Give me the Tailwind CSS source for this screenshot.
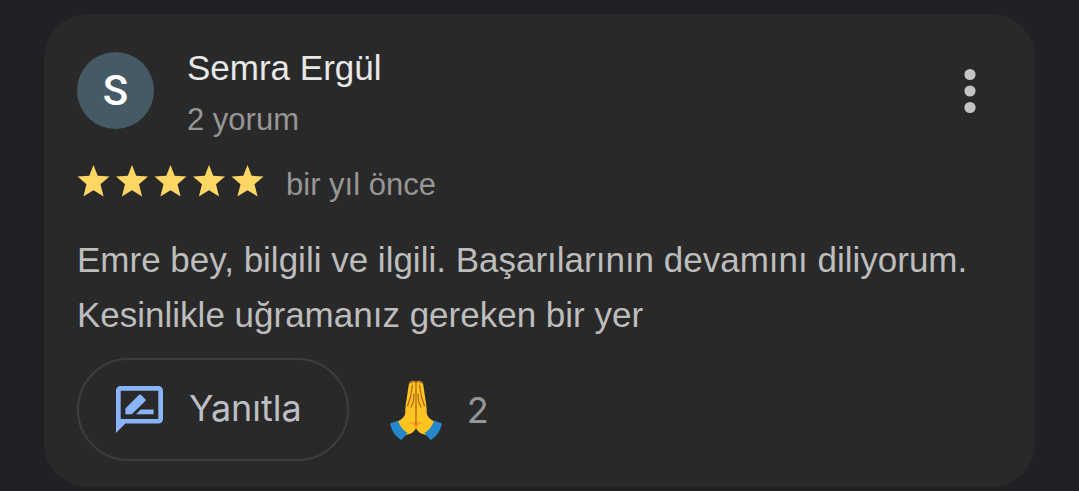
<!DOCTYPE html>
<html lang="tr">

<head>
    <meta charset="UTF-8">
    <meta name="viewport" content="width=device-width, initial-scale=1.0">
    <title>Yorumlar</title>
    <script src="https://cdn.jsdelivr.net/npm/@tailwindcss/browser@4"></script>
</head>

<body class="bg-[#202125] font-['Liberation_Sans',Arial,sans-serif]">
    <!-- REVIEW CARD -->
    <article class="mx-11 mt-3.5 rounded-[44px] bg-[#292929] px-[33px] pt-8 pb-[26px]">
        <header class="flex items-start">
            <div class="mt-1.5 flex size-[77px] shrink-0 items-center justify-center rounded-full bg-[#455a64] font-['Roboto',sans-serif] text-[42px] font-medium text-white">S</div>
            <div class="ml-[33px] grow">
                <h2 class="text-[35px] leading-[44px] text-[#e8e8e8]">Semra Ergül</h2>
                <p class="mt-2 text-[31px] leading-[44px] text-[#969696]">2 yorum</p>
            </div>
            <button type="button" aria-label="Diğer seçenekler" class="mt-[22px] mr-[26px]">
                <svg class="block h-[46px] w-3" viewBox="0 0 12 46" fill="#c4c4c4">
                    <circle cx="6" cy="6.5" r="5.6" />
                    <circle cx="6" cy="23" r="5.6" />
                    <circle cx="6" cy="39.5" r="5.6" />
                </svg>
            </button>
        </header>

        <div class="mt-5 flex items-start">
            <svg class="mt-[3px] block h-8 w-[187px]" viewBox="0 0 187 32" fill="#fdd663" role="img" aria-label="5 yıldız">
                <defs>
                    <path id="star" d="M16.5 0 20.7 10.8 32.5 11.5 23.5 19.3 26.6 31.5 16.5 25.2 6.4 31.5 9.5 19.3.5 11.5 12.3 10.8z" />
                </defs>
                <use href="#star" />
                <use href="#star" x="38.5" />
                <use href="#star" x="77" />
                <use href="#star" x="115.5" />
                <use href="#star" x="154" />
            </svg>
            <span class="ml-[22px] text-[31px] leading-[46px] text-[#969696]">bir yıl önce</span>
        </div>

        <p class="mt-6 text-[35px] leading-[55px] text-[#bdbdbd]">Emre bey, bilgili ve ilgili. Başarılarının devamını diliyorum. Kesinlikle uğramanız gereken bir yer</p>

        <!-- ACTIONS -->
        <div class="mt-4 flex items-center font-['Inter',sans-serif] text-[36px]">
            <button type="button" class="flex h-[103px] items-center rounded-full border-2 border-[#3c3d3f] pr-[45px] pb-1 pl-[37px] text-[#bdbfc4]">
                <svg class="mt-1 mr-[26px] block size-[47px]" viewBox="2 2 20 20" fill="#8ab4f8">
                    <path fill-rule="evenodd" d="M20 2H4c-1.1 0-2 .9-2 2v18l4-4h14c1.1 0 2-.9 2-2V4c0-1.1-.9-2-2-2zm0 14H4V4h16z" />
                    <path d="M6 14v-2.47l5.7-5.7c.3-.3.7-.3 1 0l1.7 1.7c.3.3.3.7 0 1L8.7 14zM18 14h-7.5l2-2H18z" />
                </svg>
                Yanıtla
            </button>
            <button type="button" class="ml-[41px] flex items-center text-[#969696]">
                <svg class="mr-[25px] block h-[60px] w-[52px]" viewBox="0 0 52 60" role="img" aria-label="Teşekkür">
                    <path fill="#ffc322" d="M21 1.500c1.500-1 3.500-1 5 .5 1.500-1.500 3.500-1.500 5-.5 1.500.5 2 1.500 2.200 3l2.300 15.500c.7 3 1.200 8 1.200 12 0 4 3 7.500 8.300 9.500L36 55c-5-1-8-3-10-7-2 4-5 6-10 7L7 41.500c5.300-2 8.300-5.500 8.300-9.500 0-4 .5-9 1.200-12L18.800 4.500c.2-1.500.7-2.500 2.200-3z" />
                    <path fill="#f9a31a" d="M26 43c2-1.500 5-1.500 8 0-4 0-6 2-8 5-2-3-4-5-8-5 3-1.500 6-1.500 8 0z" />
                    <path fill="none" stroke="#a86416" stroke-width="1.200" stroke-linecap="round" d="M26 3v42M22.500 5l-2 12-3 9M29.500 5l2 12 3 9M24 14l-.8 8-2.200 5M28 14l.8 8 2.200 5M20.500 3c2-1.500 4-1.500 5.500-.5 1.500-1 3.500-1 5.500.5" />
                    <path fill="#2587ca" d="M8 40.500C9.500 45.500 12.500 50 17.500 53L11.500 60C6 57.500 1.500 50.500 0 43.500zM44 40.500C42.500 45.500 39.500 50 34.500 53L40.500 60C46 57.500 50.500 50.500 52 43.500z" />
                </svg>
                2
            </button>
        </div>
    </article>
</body>

</html>
